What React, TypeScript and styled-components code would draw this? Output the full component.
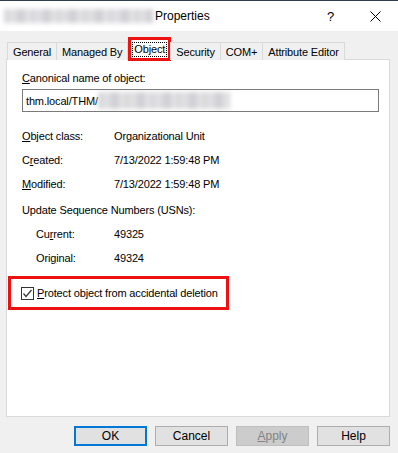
import styled, { createGlobalStyle } from "styled-components";

const GlobalStyle = createGlobalStyle`
  html, body {
    margin: 0;
    padding: 0;
    background: #f0f0f0;
  }
  body {
    font-family: "Liberation Sans", Arial, sans-serif;
    font-size: 11px;
    letter-spacing: -0.15px;
    color: #000;
  }
`;

const Window = styled.div`
  width: 398px;
  height: 453px;
  background: #f0f0f0;
  border-top: 1px solid #2f3d4c;
  box-sizing: border-box;
  display: flex;
  flex-direction: column;
  overflow: hidden;
`;

const TitleBar = styled.div`
  height: 30px;
  background: #ffffff;
  display: flex;
  align-items: center;
  padding-left: 4px;
  font-size: 12px;
  letter-spacing: 0;
`;

const BlurredBlock = styled.div<{ $w: number; $h: number }>`
  width: ${(p) => p.$w}px;
  height: ${(p) => p.$h}px;
  background: repeating-linear-gradient(
      90deg,
      #c8c8cc 0px,
      #d8d8dc 9px,
      #bdbdc3 17px,
      #e2e2e6 26px
    );
  filter: blur(2px);
  opacity: 0.75;
`;

const TitleText = styled.span`
  margin-left: 2px;
  flex: 1;
`;

const TitleButton = styled.div`
  width: 45px;
  height: 30px;
  display: flex;
  align-items: center;
  justify-content: center;
`;

const Body = styled.div`
  flex: 1;
  display: flex;
  flex-direction: column;
  padding: 7px 8px 0 6px;
`;

const TabRow = styled.div`
  display: flex;
  align-items: flex-end;
  padding-left: 2px;
  height: 22px;
  position: relative;
  z-index: 1;
`;

const Tab = styled.div<{ $active?: boolean }>`
  height: ${(p) => (p.$active ? "22px" : "18px")};
  padding: 0 ${(p) => (p.$active ? "2px" : "5px")};
  display: flex;
  align-items: center;
  background: ${(p) => (p.$active ? "#ffffff" : "#f0f0f0")};
  border: 1px solid #d9d9d9;
  border-bottom: ${(p) => (p.$active ? "1px solid #ffffff" : "none")};
  margin-left: -1px;
  box-sizing: border-box;
  position: relative;
  white-space: nowrap;
  ${(p) =>
    p.$active &&
    `
    margin-left: 1px;
    margin-right: 1px;
    outline: 3px solid #ee1111;
    outline-offset: -2px;
  `}
`;

const FocusRect = styled.span`
  border: 1px dotted #000;
  padding: 0 1px;
  line-height: 13px;
`;

const Panel = styled.div`
  height: 358px;
  background: #ffffff;
  border: 1px solid #d9d9d9;
  margin-top: -1px;
  box-sizing: border-box;
  padding: 11px 12px 0 15px;
  display: flex;
  flex-direction: column;
`;

const Label = styled.div`
  height: 14px;
  line-height: 14px;
`;

const TextBox = styled.div`
  margin-top: 4px;
  width: 357px;
  height: 23px;
  border: 1px solid #7a7a7a;
  box-sizing: border-box;
  display: flex;
  align-items: center;
  padding-left: 3px;
  overflow: hidden;
`;

const Fields = styled.div`
  display: grid;
  grid-template-columns: 92px 1fr;
  row-gap: 10px;
  margin-top: 17px;
`;

const USNTitle = styled.div`
  margin-top: 12px;
  height: 14px;
  line-height: 14px;
`;

const USNFields = styled(Fields)`
  grid-template-columns: 78px 1fr;
  padding-left: 14px;
  margin-top: 10px;
`;

const Cell = styled.div`
  height: 14px;
  line-height: 14px;
`;

const CheckGroup = styled.div`
  margin: 11px 0 0 -14px;
  width: 221px;
  height: 34px;
  border: 3px solid #ee1111;
  box-sizing: border-box;
  display: flex;
  align-items: center;
  padding-left: 10px;
  gap: 3px;
`;

const CheckBox = styled.div`
  width: 13px;
  height: 13px;
  border: 1px solid #333333;
  box-sizing: border-box;
  background: #fff;
  display: flex;
  align-items: center;
  justify-content: center;
`;

const ButtonRow = styled.div`
  display: flex;
  justify-content: flex-end;
  gap: 8px;
  margin-top: 9px;
`;

const Button = styled.div<{ $primary?: boolean; $disabled?: boolean }>`
  width: 73px;
  height: 20px;
  box-sizing: border-box;
  display: flex;
  align-items: center;
  justify-content: center;
  background: ${(p) => (p.$disabled ? "#cccccc" : "#e1e1e1")};
  border: ${(p) =>
    p.$primary ? "2px solid #0078d7" : p.$disabled ? "1px solid #bfbfbf" : "1px solid #adadad"};
  color: ${(p) => (p.$disabled ? "#838383" : "#000")};
  font-size: 12px;
  letter-spacing: 0;
`;

const U = styled.span`
  text-decoration: underline;
  text-underline-offset: 1px;
`;

export default function App() {
  return (
    <>
      <GlobalStyle />
      <Window>
        <TitleBar>
          <BlurredBlock $w={149} $h={14} />
          <TitleText>Properties</TitleText>
          <TitleButton>
            <span style={{ fontSize: 13 }}>?</span>
          </TitleButton>
          <TitleButton>
            <svg width="11" height="11" viewBox="0 0 11 11">
              <path d="M0.5 0.5 L10.5 10.5 M10.5 0.5 L0.5 10.5" stroke="#000" strokeWidth="1" />
            </svg>
          </TitleButton>
        </TitleBar>
        <Body>
          <TabRow>
            <Tab>General</Tab>
            <Tab>Managed By</Tab>
            <Tab $active>
              <FocusRect>Object</FocusRect>
            </Tab>
            <Tab>Security</Tab>
            <Tab>COM+</Tab>
            <Tab>Attribute Editor</Tab>
          </TabRow>
          <Panel>
            <Label>
              <U>C</U>anonical name of object:
            </Label>
            <TextBox>
              thm.local/THM/
              <BlurredBlock $w={132} $h={17} />
            </TextBox>
            <Fields>
              <Cell>
                <U>O</U>bject class:
              </Cell>
              <Cell>Organizational Unit</Cell>
              <Cell>
                C<U>r</U>eated:
              </Cell>
              <Cell>7/13/2022 1:59:48 PM</Cell>
              <Cell>
                <U>M</U>odified:
              </Cell>
              <Cell>7/13/2022 1:59:48 PM</Cell>
            </Fields>
            <USNTitle>Update Sequence Numbers (USNs):</USNTitle>
            <USNFields>
              <Cell>
                Cu<U>r</U>rent:
              </Cell>
              <Cell>49325</Cell>
              <Cell>
                Ori<U>g</U>inal:
              </Cell>
              <Cell>49324</Cell>
            </USNFields>
            <CheckGroup>
              <CheckBox>
                <svg width="11" height="11" viewBox="0 0 11 11">
                  <path d="M1.5 5.5 L4 8.5 L9.5 2" stroke="#333" strokeWidth="1.2" fill="none" />
                </svg>
              </CheckBox>
              <span>
                <U>P</U>rotect object from accidental deletion
              </span>
            </CheckGroup>
          </Panel>
          <ButtonRow>
            <Button $primary>OK</Button>
            <Button>Cancel</Button>
            <Button $disabled>
              <span>
                <U>A</U>pply
              </span>
            </Button>
            <Button>Help</Button>
          </ButtonRow>
        </Body>
      </Window>
    </>
  );
}
